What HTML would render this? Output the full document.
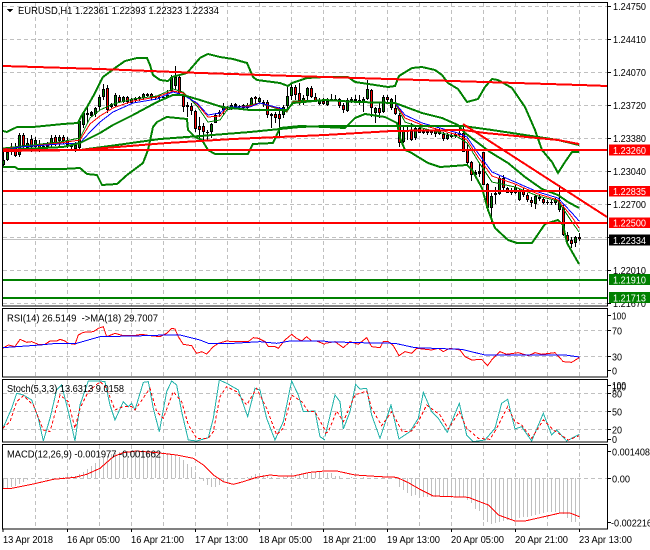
<!DOCTYPE html>
<html><head><meta charset="utf-8"><style>
html,body{margin:0;padding:0;background:#fff;width:650px;height:550px;overflow:hidden}
svg{display:block}
path,use,rect{shape-rendering:crispEdges}
text{font-family:"Liberation Sans",sans-serif;font-size:10px;fill:#000}
</style></head><body>
<svg width="650" height="550" viewBox="0 0 650 550" xmlns="http://www.w3.org/2000/svg">
<rect width="650" height="550" fill="#fff"/>
<!-- grid -->
<g fill="none" stroke="#c0c0c0" stroke-width="1" stroke-dasharray="4 3">
<path d="M35.5 3V306M67.5 3V306M99.5 3V306M131.5 3V306M163.5 3V306M195.5 3V306M227.5 3V306M259.5 3V306M291.5 3V306M323.5 3V306M355.5 3V306M387.5 3V306M419.5 3V306M451.5 3V306M483.5 3V306M515.5 3V306M547.5 3V306M579.5 3V306"/>
<path d="M3 6.5H607M3 39.5H607M3 72.5H607M3 105.5H607M3 138.5H607M3 171.5H607M3 204.5H607M3 237.5H607M3 270.5H607M3 303.5H607"/>
<path d="M35.5 309V377M67.5 309V377M99.5 309V377M131.5 309V377M163.5 309V377M195.5 309V377M227.5 309V377M259.5 309V377M291.5 309V377M323.5 309V377M355.5 309V377M387.5 309V377M419.5 309V377M451.5 309V377M483.5 309V377M515.5 309V377M547.5 309V377M579.5 309V377"/>
<path d="M3 330.5H607M3 356.5H607"/>
<path d="M35.5 380V442M67.5 380V442M99.5 380V442M131.5 380V442M163.5 380V442M195.5 380V442M227.5 380V442M259.5 380V442M291.5 380V442M323.5 380V442M355.5 380V442M387.5 380V442M419.5 380V442M451.5 380V442M483.5 380V442M515.5 380V442M547.5 380V442M579.5 380V442"/>
<path d="M3 393.5H607M3 411.5H607M3 429.5H607"/>
<path d="M35.5 445V529M67.5 445V529M99.5 445V529M131.5 445V529M163.5 445V529M195.5 445V529M227.5 445V529M259.5 445V529M291.5 445V529M323.5 445V529M355.5 445V529M387.5 445V529M419.5 445V529M451.5 445V529M483.5 445V529M515.5 445V529M547.5 445V529M579.5 445V529"/>
<path d="M3 478.5H607"/>
</g>
<path d="M3 239.5H607" stroke="#c0c0c0" stroke-width="1"/>
<!-- candle wicks -->
<path fill="none" stroke="#000" stroke-width="1" d="M3.5 152V167M7.5 150V161M11.5 143V155M15.5 143V157M19.5 133V157M23.5 133V148M27.5 138V150M31.5 135V152M35.5 137V150M39.5 140V152M43.5 143V150M47.5 142V149M51.5 135V147M55.5 135V146M59.5 135V146M63.5 135V144M67.5 137V148M71.5 143V151M75.5 142V152M79.5 119V150M83.5 112V128M87.5 107V123M91.5 111V117M95.5 107V117M99.5 95V110M103.5 84V100M107.5 85V113M111.5 103V108M115.5 93V107M119.5 95V103M123.5 96V103M127.5 96V104M131.5 98V104M135.5 97V102M139.5 96V101M143.5 93V100M147.5 93V97M151.5 93V100M155.5 96V100M159.5 95V101M163.5 96V99M167.5 90V98M171.5 75V93M175.5 66V90M179.5 76V95M183.5 95V112M187.5 102V117M191.5 103V115M195.5 110V132M199.5 117V138M203.5 123V142M207.5 130V140M211.5 123V138M215.5 113V123M219.5 110V117M223.5 103V115M227.5 106V110M231.5 103V110M235.5 103V108M239.5 105V108M243.5 104V109M247.5 103V109M251.5 97V107M255.5 96V105M259.5 97V103M263.5 100V107M267.5 100V118M271.5 113V128M275.5 112V123M279.5 107V136M283.5 105V118M287.5 86V108M291.5 83V100M295.5 85V100M299.5 83V105M303.5 95V105M307.5 87V100M311.5 86V98M315.5 93V102M319.5 98V105M323.5 98V105M327.5 98V106M331.5 94V101M335.5 95V101M339.5 98V108M343.5 103V113M347.5 98V112M351.5 97V103M355.5 95V103M359.5 95V105M363.5 97V112M367.5 80V100M371.5 89V117M375.5 107V123M379.5 102V118M383.5 95V113M387.5 95V102M391.5 98V110M395.5 95V115M399.5 113V147M403.5 127V143M407.5 127V140M411.5 123V141M415.5 127V140M419.5 127V133M423.5 128V134M427.5 130V135M431.5 130V135M435.5 128V137M439.5 128V135M443.5 132V141M447.5 133V140M451.5 133V138M455.5 132V138M459.5 128V137M463.5 124V152M467.5 143V166M471.5 161V181M475.5 170V178M479.5 163V177M483.5 152V185M487.5 183V208M491.5 193V223M495.5 187V204M499.5 176V195M503.5 175V190M507.5 187V193M511.5 188V195M515.5 185V194M519.5 189V201M523.5 188V197M527.5 193V202M531.5 197V207M535.5 195V209M539.5 195V201M543.5 197V204M547.5 200V205M551.5 199V205M555.5 198V205M559.5 185V212M563.5 205V236M567.5 232V245M571.5 237V248M575.5 236V247M579.5 233V241"/>
<!-- candle bodies -->
<path fill="none" stroke="#000" stroke-width="3" d="M3.5 160V165M7.5 152V160M11.5 147V152M15.5 148V156M19.5 135V155M23.5 135V146M27.5 143V148M31.5 139V147M35.5 140V147M39.5 144V148M43.5 146V148M47.5 145V147M51.5 138V145M55.5 137V143M59.5 137V141M63.5 137V141M67.5 140V145M71.5 145V147M75.5 145V149M79.5 121V148M83.5 113V125M87.5 113V115M91.5 112V116M95.5 108V114M99.5 97V107M103.5 89V97M107.5 88V110M111.5 104V107M115.5 95V106M119.5 97V102M123.5 97V102M127.5 97V102M131.5 99V103M135.5 98V100M139.5 97V99M143.5 94V98M147.5 94V96M151.5 94V98M155.5 97V98M159.5 97V98M163.5 97V98M167.5 95V97M171.5 77V91M175.5 77V86M179.5 77V93M183.5 96V107M187.5 105V107M191.5 106V111M195.5 111V129M199.5 126V130M203.5 126V132M207.5 132V133M211.5 124V132M215.5 115V123M219.5 112V114M223.5 106V110M227.5 107V108M231.5 105V108M235.5 104V107M239.5 106V107M243.5 105V108M247.5 105V108M251.5 98V105M255.5 97V99M259.5 98V102M263.5 102V104M267.5 102V115M271.5 114V116M275.5 114V118M279.5 114V119M283.5 107V115M287.5 96V106M291.5 87V96M295.5 87V95M299.5 93V101M303.5 98V101M307.5 88V96M311.5 88V97M315.5 97V101M319.5 100V104M323.5 101V104M327.5 101V105M331.5 99V100M335.5 99V100M339.5 99V106M343.5 105V110M347.5 100V111M351.5 99V101M355.5 99V101M359.5 100V103M363.5 99V103M367.5 89V99M371.5 90V108M375.5 108V113M379.5 108V113M383.5 97V112M387.5 97V100M391.5 99V108M395.5 108V114M399.5 115V143M403.5 131V142M407.5 130V132M411.5 131V140M415.5 128V138M419.5 128V133M423.5 131V133M427.5 131V133M431.5 131V133M435.5 130V134M439.5 130V134M443.5 134V139M447.5 135V139M451.5 135V137M455.5 134V136M459.5 133V135M463.5 133V152M467.5 150V163M471.5 162V175M475.5 172V175M479.5 171V174M483.5 152V185M487.5 184V208M491.5 196V208M495.5 193V195M499.5 178V194M503.5 178V188M507.5 188V193M511.5 191V193M515.5 187V193M519.5 191V200M523.5 191V195M527.5 195V200M531.5 200V203M535.5 196V204M539.5 197V199M543.5 199V203M547.5 202V203M551.5 202V203M555.5 200V203M559.5 202V210M563.5 208V235M567.5 235V241M571.5 240V244M575.5 237V243M579.5 237V239"/>
<path fill="none" stroke="#008000" stroke-width="1" d="M3.5 161V164M7.5 153V159M19.5 136V154M27.5 144V147M35.5 141V146M43.5 147V147.5M51.5 139V144M59.5 138V140M75.5 146V148M79.5 122V147M83.5 114V124M95.5 109V113M99.5 98V106M103.5 90V96M115.5 96V105M123.5 98V101M131.5 100V102M143.5 95V97M167.5 95.5V96.5M171.5 78V90M175.5 78V85M211.5 125V131M215.5 116V122M223.5 107V109M231.5 106V107M243.5 106V107M251.5 99V104M259.5 99V101M283.5 108V114M287.5 97V105M291.5 88V95M303.5 99V100M307.5 89V95M319.5 101V103M327.5 102V104M347.5 101V110M363.5 100V102M367.5 90V98M375.5 109V112M383.5 98V111M391.5 100V107M403.5 132V141M415.5 129V137M435.5 131V133M447.5 136V138M459.5 134V134.5M491.5 197V207M499.5 179V193M515.5 188V192M519.5 192V199M535.5 197V203M555.5 201V202M559.5 203V209M575.5 238V242"/>
<path fill="none" stroke="#f00" stroke-width="1" d="M11.5 148V151M15.5 149V155M23.5 136V145M31.5 140V146M39.5 145V147M55.5 138V142M63.5 138V140M67.5 141V144M107.5 89V109M119.5 98V101M127.5 98V101M151.5 95V97M179.5 78V92M183.5 97V106M191.5 107V110M195.5 112V128M199.5 127V129M203.5 127V131M255.5 98V98.5M267.5 103V114M275.5 115V117M279.5 115V118M295.5 88V94M299.5 94V100M311.5 89V96M315.5 98V100M323.5 102V103M339.5 100V105M343.5 106V109M359.5 101V102M371.5 91V107M379.5 109V112M387.5 98V99M395.5 109V113M399.5 116V142M411.5 132V139M419.5 129V132M431.5 132V132.5M439.5 131V133M443.5 135V138M463.5 134V151M467.5 151V162M471.5 163V174M483.5 153V184M487.5 185V207M503.5 179V187M507.5 189V192M523.5 192V194M527.5 196V199M531.5 201V202M543.5 200V202M563.5 209V234M567.5 236V240M571.5 241V243M579.5 238V238.5"/>
<!-- moving averages -->
<g fill="none" stroke-width="1">
<path stroke="#008000" d="M3 148L60 142L80 138L90 118L100 110L113 104L133 99L157 96L173 89L183 92L197 106L208 122L220 120L227 110L250 105L260 103L287 112L293 101L323 100L395 103L405 122L422 128L458 137L467 143L478 161L492 182L515 187L538 196L558 201L572 222L579 232"/>
<path stroke="#f00" d="M3 149L60 143L80 140L90 124L100 116L113 108L133 101L157 97L173 91L183 93L197 104L208 117L220 116L227 108L250 106L260 103L287 111L293 102L323 100L395 103L405 118L422 125L458 135L467 140L478 157L492 176L515 184L538 194L558 200L572 217L579 228"/>
<path stroke="#00f" d="M3 150L20 147L60 144L80 143L90 132L100 122L113 112L133 103L157 99L173 92L183 95L197 103L208 115L220 113L227 107L250 107L260 103L287 110L293 103L323 100L395 103L405 115L422 123L458 133L467 137L478 153L492 172L515 182L538 192L558 198L572 213L579 221"/>
</g>
<!-- bands -->
<g fill="none" stroke="#008000" stroke-width="2">
<path d="M3 131L7 132L17 127L33 127L63 124L78 123L82 115L87 107L95 93L103 77L115 68L125 61L137 58L147 58L150 65L153 75L160 80L168 81L172 77L187 73L200 58L208 54L220 57L233 59L247 63L253 77L257 80L280 83L288 86L292 83L307 78L325 77L348 77L355 82L375 85L388 87L395 86L399 76L412 68L422 67L435 70L442 75L448 83L458 89L467 102L478 99L485 87L492 79L498 80L512 88L525 107L535 130L542 150L552 162L558 173L565 162L572 152L579 152"/>
<path d="M3 167L15 167L18 169L63 169L80 168L87 174L97 175L102 185L117 184L127 175L143 163L148 150L153 127L157 122L167 117L187 119L188 130L195 137L202 140L208 150L215 154L248 154L253 144L273 143L280 128L300 126L325 127L345 128L355 118L365 114L385 117L397 123L400 138L405 150L410 152L428 163L440 167L467 165L472 170L482 188L488 210L495 228L508 240L517 243L532 243L545 224L558 220L563 225L567 243L579 264"/>
<path d="M3 150L63 147L80 143L100 133L113 125L133 115L157 102L173 95L183 95L200 100L222 107L250 110L287 110L293 103L325 100L358 102L395 103L422 113L442 118L458 125L465 133L490 152L508 163L525 177L542 189L558 195L568 202L579 208"/>
<path d="M80 150L117 145L160 139L200 136L250 132L300 127L325 126L463 126L492 130L525 135L558 140L579 145"/>
</g>
<!-- red trend lines -->
<g fill="none" stroke="#f00" stroke-width="2">
<path d="M3 66L100 69L200 73L325 77L580 85L607 86"/>
<path d="M3 151L80 150L167 143L233 139L325 135L392 131L463 130L485 133L558 140L579 144"/>
<path d="M463 124L607 217"/>
<path d="M3 150H607M3 191H607M3 223H607"/>
</g>
<path d="M3 280H607M3 298H607" stroke="#008000" stroke-width="2" fill="none"/>
<!-- RSI + Stoch -->
<g fill="none" stroke-width="3">
<g transform="translate(0,305) scale(.3333)">
<path stroke="#f00" d="M8 130L25 120L45 125L60 103L80 112L95 110L115 118L135 118L150 108L170 108L180 103L195 108L205 115L225 118L235 90L250 82L280 80L295 70L310 65L320 95L345 85L370 92L400 92L425 88L450 92L480 95L500 85L515 70L525 72L535 95L550 118L575 122L590 145L605 140L620 147L640 125L655 115L680 108L700 110L725 110L745 110L760 98L775 100L795 110L805 125L825 125L835 130L855 105L875 88L890 100L905 108L920 95L935 108L950 108L975 118"/>
<path stroke="#00f" d="M8 128L50 125L120 120L170 115L230 115L300 95L400 93L500 90L540 90L600 105L625 115L700 115L780 110L830 115L870 108L975 108"/>
<path stroke="#20b2aa" d="M8 372L35 310L50 265L70 270L95 285L115 340L130 408L150 340L170 255L185 240L205 320L225 408L240 300L265 228L300 228L315 230L330 300L345 345L370 290L385 305L395 295L405 315L430 232L445 230L460 310L478 380L500 260L515 228L530 240L545 320L565 405L590 408L625 398L640 340L658 225L680 235L715 255L743 335L765 250L780 255L800 340L825 405L850 350L875 228L895 270L910 320L945 318L960 395L975 405"/>
<path stroke="#f00" stroke-dasharray="9 7" d="M8 370L30 350L50 290L70 272L100 300L130 375L150 380L180 270L205 290L225 370L240 310L265 260L300 230L320 250L345 315L370 305L395 305L405 315L450 250L470 320L490 340L520 260L545 290L565 360L590 400L625 400L640 380L660 275L680 245L710 260L740 300L770 250L800 310L830 390L850 370L875 270L905 290L925 320L945 320L975 375"/>
</g>
<g transform="translate(325,305) scale(.3333)">
<path stroke="#f00" d="M0 115L30 110L55 128L75 110L100 118L125 98L140 125L165 128L175 110L190 110L205 122L222 152L240 140L260 145L275 130L320 135L340 130L355 140L375 130L405 135L420 155L440 165L470 163L488 182L500 165L525 140L545 148L565 145L580 143L610 152L630 143L650 148L690 143L715 170L740 172L763 158"/>
<path stroke="#00f" d="M0 110L100 113L210 115L270 128L410 133L480 150L600 150L720 150L763 156"/>
<path stroke="#20b2aa" d="M0 395L30 270L45 290L55 372L75 320L92 238L105 252L125 250L140 330L165 400L198 300L222 402L255 380L280 340L295 262L320 320L340 340L367 382L403 295L425 390L445 410L480 405L510 370L530 295L548 283L570 372L590 365L620 408L655 325L680 390L695 375L725 408L763 388"/>
<path stroke="#f00" stroke-dasharray="9 7" d="M0 385L10 380L35 318L55 350L90 270L125 258L140 310L170 362L200 320L232 380L260 378L280 350L305 300L345 330L370 372L403 320L425 370L460 400L495 403L515 370L548 305L570 350L590 360L620 400L655 345L685 375L730 405L763 392"/>
</g>
</g>
<!-- MACD bars -->
<path fill="none" stroke="#c0c0c0" stroke-width="1" d="M3.5 478V488M7.5 478V488M11.5 478V487M15.5 478V486M19.5 478V484M23.5 478V482M27.5 478V480M31.5 478V479M59.5 478V477M63.5 478V477M67.5 478V476M71.5 478V476M75.5 478V476M79.5 478V474M83.5 478V472M87.5 478V469M91.5 478V466M95.5 478V463M99.5 478V460M103.5 478V458M107.5 478V456M111.5 478V454M115.5 478V453M119.5 478V452M123.5 478V451M127.5 478V451M131.5 478V451M135.5 478V451M139.5 478V451M143.5 478V451M147.5 478V451M151.5 478V451M155.5 478V451M159.5 478V452M163.5 478V452M167.5 478V453M171.5 478V454M175.5 478V455M179.5 478V457M183.5 478V460M187.5 478V464M191.5 478V467M195.5 478V472M199.5 478V477M203.5 478V481M207.5 478V485M211.5 478V487M215.5 478V487M219.5 478V485M223.5 478V482M227.5 478V480M247.5 478V477M251.5 478V476M255.5 478V474M259.5 478V474M263.5 478V475M267.5 478V476M271.5 478V477M283.5 478V477M287.5 478V476M291.5 478V475M295.5 478V475M299.5 478V474M303.5 478V473M307.5 478V473M311.5 478V473M315.5 478V472M319.5 478V472M323.5 478V472M327.5 478V473M331.5 478V473M335.5 478V476M339.5 478V476M351.5 478V477M363.5 478V477M399.5 478V487M403.5 478V490M407.5 478V493M411.5 478V496M415.5 478V495M419.5 478V497M423.5 478V497M427.5 478V497M431.5 478V497M435.5 478V497M439.5 478V497M443.5 478V497M447.5 478V497M451.5 478V497M455.5 478V497M459.5 478V497M463.5 478V497M467.5 478V500M471.5 478V503M475.5 478V509M479.5 478V511M483.5 478V520M487.5 478V522M491.5 478V524M495.5 478V523M499.5 478V522M503.5 478V521M507.5 478V520M511.5 478V520M515.5 478V520M519.5 478V518M523.5 478V517M527.5 478V517M531.5 478V516M535.5 478V515M539.5 478V514M543.5 478V513M547.5 478V512M551.5 478V512M555.5 478V512M559.5 478V513M563.5 478V514M567.5 478V518M571.5 478V522M575.5 478V522M579.5 478V517"/>
<g fill="none" stroke="#f00" stroke-width="3">
<path transform="translate(0,440) scale(.3333)" d="M8 145L35 145L100 132L160 118L225 112L260 103L300 85L340 50L370 38L410 33L470 38L530 45L580 55L610 75L640 105L670 125L700 133L730 125L770 112L810 105L840 108L880 108L930 97L975 93"/>
<path transform="translate(325,440) scale(.3333)" d="M0 93L35 93L90 105L165 110L215 112L250 128L285 148L325 168L430 172L490 195L520 225L570 243L600 243L680 225L705 219L735 219L763 230"/>
</g>
<!-- frames -->
<g fill="none" stroke="#000" stroke-width="1">
<rect x="2.5" y="2.5" width="605" height="303.5"/>
<rect x="2.5" y="308.5" width="605" height="68.5"/>
<rect x="2.5" y="379.5" width="605" height="62.5"/>
<rect x="2.5" y="444.5" width="605" height="84.5"/>
<path d="M607.5 6.5H611M607.5 39.5H611M607.5 72.5H611M607.5 105.5H611M607.5 138.5H611M607.5 171.5H611M607.5 204.5H611M607.5 237.5H611M607.5 270.5H611M607.5 303.5H611M607.5 315.5H611M607.5 330.5H611M607.5 356.5H611M607.5 370.5H611M607.5 385.5H611M607.5 393.5H611M607.5 411.5H611M607.5 429.5H611M607.5 439.5H611M607.5 451.5H611M607.5 478.5H611M607.5 522.5H611"/>
<path d="M3 529V532M67.5 529V532M131.5 529V532M195.5 529V532M259.5 529V532M323.5 529V532M387.5 529V532M451.5 529V532M515.5 529V532M579.5 529V532"/>
</g>
<!-- axis labels -->
<g>
<text x="613" y="10" textLength="33" lengthAdjust="spacingAndGlyphs">1.24750</text>
<text x="613" y="43" textLength="33" lengthAdjust="spacingAndGlyphs">1.24410</text>
<text x="613" y="76" textLength="33" lengthAdjust="spacingAndGlyphs">1.24070</text>
<text x="613" y="109" textLength="33" lengthAdjust="spacingAndGlyphs">1.23720</text>
<text x="613" y="142" textLength="33" lengthAdjust="spacingAndGlyphs">1.23380</text>
<text x="613" y="175" textLength="33" lengthAdjust="spacingAndGlyphs">1.23040</text>
<text x="613" y="208" textLength="33" lengthAdjust="spacingAndGlyphs">1.22700</text>
<text x="613" y="274" textLength="33" lengthAdjust="spacingAndGlyphs">1.22010</text>
<text x="613" y="307" textLength="33" lengthAdjust="spacingAndGlyphs">1.21670</text>
</g>
<!-- label boxes -->
<rect x="609" y="144.5" width="41" height="11" fill="#f00"/>
<rect x="609" y="186" width="41" height="10.500" fill="#f00"/>
<rect x="609" y="217.500" width="41" height="10.500" fill="#f00"/>
<rect x="609" y="234.500" width="41" height="11" fill="#000"/>
<rect x="609" y="274" width="41" height="11" fill="#008000"/>
<rect x="609" y="292" width="41" height="11" fill="#008000"/>
<g>
<text x="613" y="154" textLength="33" lengthAdjust="spacingAndGlyphs" style="fill:#fff">1.23260</text>
<text x="613" y="195" textLength="33" lengthAdjust="spacingAndGlyphs" style="fill:#fff">1.22835</text>
<text x="613" y="226.500" textLength="33" lengthAdjust="spacingAndGlyphs" style="fill:#fff">1.22500</text>
<text x="613" y="244" textLength="33" lengthAdjust="spacingAndGlyphs" style="fill:#fff">1.22334</text>
<text x="613" y="283.500" textLength="33" lengthAdjust="spacingAndGlyphs" style="fill:#fff">1.21910</text>
<text x="613" y="301.500" textLength="33" lengthAdjust="spacingAndGlyphs" style="fill:#fff">1.21713</text>
</g>
<text x="612" y="319.500" textLength="14" lengthAdjust="spacingAndGlyphs">100</text>
<text x="612" y="334.500" textLength="10" lengthAdjust="spacingAndGlyphs">70</text>
<text x="612" y="360.500" textLength="10" lengthAdjust="spacingAndGlyphs">30</text>
<text x="612" y="374.500" textLength="5" lengthAdjust="spacingAndGlyphs">0</text>
<text x="612" y="389" textLength="14" lengthAdjust="spacingAndGlyphs">100</text>
<text x="612" y="390.500" textLength="14" lengthAdjust="spacingAndGlyphs">100</text>
<text x="612" y="397.500" textLength="10" lengthAdjust="spacingAndGlyphs">80</text>
<text x="612" y="415.500" textLength="10" lengthAdjust="spacingAndGlyphs">50</text>
<text x="612" y="433.500" textLength="10" lengthAdjust="spacingAndGlyphs">20</text>
<text x="612" y="443" textLength="5" lengthAdjust="spacingAndGlyphs">0</text>
<text x="612" y="455.500" textLength="38" lengthAdjust="spacingAndGlyphs">0.001408</text>
<text x="612" y="482.500" textLength="18" lengthAdjust="spacingAndGlyphs">0.00</text>
<text x="611" y="526.500" textLength="41" lengthAdjust="spacingAndGlyphs">-0.002216</text>
<!-- titles -->
<path d="M7 9H13L10 12.500Z" fill="#000"/>
<text x="18" y="14" textLength="201" lengthAdjust="spacingAndGlyphs">EURUSD,H1  1.22361 1.22393 1.22323 1.22334</text>
<text x="7" y="321.500" textLength="151" lengthAdjust="spacingAndGlyphs" xml:space="preserve">RSI(14) 26.5149  -&gt;MA(18) 29.7007</text>
<text x="7" y="392" textLength="117" lengthAdjust="spacingAndGlyphs">Stoch(5,3,3) 13.6313 9.0158</text>
<text x="7" y="457.500" textLength="154" lengthAdjust="spacingAndGlyphs">MACD(12,26,9) -0.001977 -0.001662</text>
<!-- time labels -->
<text x="3" y="543" textLength="50" lengthAdjust="spacingAndGlyphs">13 Apr 2018</text>
<text x="67" y="543" textLength="53" lengthAdjust="spacingAndGlyphs">16 Apr 05:00</text>
<text x="131" y="543" textLength="53" lengthAdjust="spacingAndGlyphs">16 Apr 21:00</text>
<text x="195" y="543" textLength="53" lengthAdjust="spacingAndGlyphs">17 Apr 13:00</text>
<text x="259" y="543" textLength="53" lengthAdjust="spacingAndGlyphs">18 Apr 05:00</text>
<text x="323" y="543" textLength="53" lengthAdjust="spacingAndGlyphs">18 Apr 21:00</text>
<text x="387" y="543" textLength="53" lengthAdjust="spacingAndGlyphs">19 Apr 13:00</text>
<text x="451" y="543" textLength="53" lengthAdjust="spacingAndGlyphs">20 Apr 05:00</text>
<text x="515" y="543" textLength="53" lengthAdjust="spacingAndGlyphs">20 Apr 21:00</text>
<text x="579" y="543" textLength="53" lengthAdjust="spacingAndGlyphs">23 Apr 13:00</text>
</svg>
</body></html>
